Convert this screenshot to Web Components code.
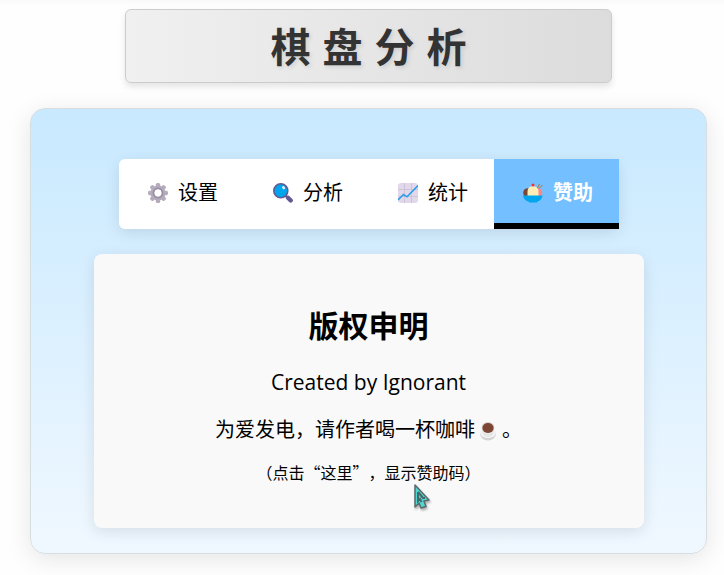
<!DOCTYPE html>
<html lang="zh-CN">
<head>
<meta charset="utf-8">
<title>棋盘分析</title>
<style>
html { background: #fefefe; }
body { margin: 0; padding: 9px 17px 21px 30px; color: #000; font: 20px/28px "Open Sans", "Noto Sans CJK SC", sans-serif;
  background: linear-gradient(#f9f9f9, #fefefe) content-box top / 100% 6px no-repeat; background-origin: border-box; background-clip: border-box; }
</style>
</head>
<body>
<board-page>
  <page-title>棋盘分析</page-title>
  <board-panel>
    <tab-bar>
      <tab-item icon="gear">设置</tab-item>
      <tab-item icon="search">分析</tab-item>
      <tab-item icon="chart">统计</tab-item>
      <tab-item icon="sundae" active>赞助</tab-item>
    </tab-bar>
    <copyright-card></copyright-card>
  </board-panel>
</board-page>
<script>
const icons = {
  gear: `<svg viewBox="0 0 20 20" width="20" height="20" aria-hidden="true"><g fill="#b4acbc"><circle cx="10" cy="10" r="7.6"/><rect x="7.8" y="0" width="4.4" height="20" rx="1.6"/><rect x="7.8" y="0" width="4.4" height="20" rx="1.6" transform="rotate(45 10 10)"/><rect x="7.8" y="0" width="4.4" height="20" rx="1.6" transform="rotate(90 10 10)"/><rect x="7.8" y="0" width="4.4" height="20" rx="1.6" transform="rotate(135 10 10)"/></g><circle cx="10" cy="10" r="4.4" fill="#fff" stroke="#998ea4" stroke-width="2"/><circle cx="10" cy="10" r="3.4" fill="#fff"/></svg>`,
  search: `<svg viewBox="0 0 20 20" width="20" height="20" aria-hidden="true"><path d="M12.5 12.5l2 2" stroke="#533566" stroke-width="2"/><path d="M15 14.8l2.7 2.7" stroke="#635994" stroke-width="4.4" stroke-linecap="round"/><circle cx="7.8" cy="7.8" r="7" fill="#00a6ed" stroke="#635994" stroke-width="1.6"/><ellipse cx="10.6" cy="4.7" rx="1.3" ry="1.7" fill="#e8f7ff" transform="rotate(-35 10.6 4.7)"/></svg>`,
  chart: `<svg viewBox="0 0 20 20" width="20" height="20" aria-hidden="true"><rect width="20" height="20" rx="3" fill="#e1d8ec"/><path d="M6.5 0v20M13.5 0v20M0 6.5h20M0 13.5h20" stroke="#cdc4d6" stroke-width="1"/><path d="M0 17l5.5-5.5 3.5 2.3L20 2.5" fill="none" stroke="#2b9ee8" stroke-width="1.6"/></svg>`,
  sundae: `<svg viewBox="0 0 20 20" width="20" height="20" aria-hidden="true"><path d="M14 6l2.5-5M15.5 6l4-4" stroke="#b97028" stroke-width="1"/><circle cx="4.7" cy="9.8" r="4.5" fill="#7d4533"/><circle cx="14.8" cy="9.8" r="4.5" fill="#ff8687"/><path d="M4.5 13V8.5a5.5 5.5 0 0 1 11 0V13z" fill="#ffefb6"/><circle cx="10" cy="1.9" r="1.5" fill="#f8312f"/><path d="M0 12.5h19.500c-.4 3.300-2.600 5.500-5.500 6.300v.7H6v-.7C2.800 18 .4 15.800 0 12.500z" fill="#00a6ed"/></svg>`,
  coffee: `<svg viewBox="0 0 20 20" width="20" height="20" aria-hidden="true"><ellipse cx="10" cy="13" rx="8" ry="6.5" fill="#d3d3d3"/><path d="M2 11c0 3.800 3.600 6 8 6s8-2.200 8-6l-1-2H3z" fill="#f4f4f4"/><path d="M4 5v4c0 5 2.500 7 6 7s6-2 6-7V5z" fill="#e6e6e6"/><ellipse cx="10" cy="6.5" rx="6.3" ry="5.5" fill="#d3d3d3"/><ellipse cx="10" cy="7" rx="5.6" ry="5" fill="#7d4533"/></svg>`
};

function define(name, html, setup) {
  customElements.define(name, class extends HTMLElement {
    constructor() {
      super();
      this.attachShadow({ mode: "open" }).innerHTML = html;
    }
    connectedCallback() { if (setup) setup(this, this.shadowRoot); }
  });
}

define("board-page", `<style>
:host { display: flex; flex-direction: column; align-items: center; gap: 25px; }
</style><slot></slot>`);

define("page-title", `<style>
:host { display: block; box-sizing: border-box; width: 72%; padding: 9px 0 7px 12px; border: 1px solid #ccc; border-radius: 6px;
  background: linear-gradient(to right, #f0f0f0, #dcdcdc); box-shadow: 0 4px 6px rgba(0,0,0,.1); }
h1 { margin: 0; color: #333; text-align: center; font-size: 40px; line-height: 56px; font-weight: 700; letter-spacing: 12px; text-shadow: 2px 2px 4px rgba(0,0,0,.1); }
</style><h1><slot></slot></h1>`);

define("board-panel", `<style>
:host { display: flex; flex-direction: column; align-items: center; gap: 25px; box-sizing: border-box; width: 100%;
  padding: 50px 24px 25px; border: 1px solid #d8dde0; border-radius: 15px;
  background: linear-gradient(#c8e9ff, #f0f8ff); box-shadow: 0 5px 25px rgba(0,0,0,.1); }
</style><slot></slot>`);

define("tab-bar", `<style>
:host { display: block; width: 100%; max-width: 500px; border-radius: 6px; box-shadow: 0 4px 15px rgba(0,0,0,.1); }
nav { display: grid; grid-template-columns: repeat(4, 1fr); border-radius: 6px; background: #fff; }
</style><nav><slot></slot></nav>`);

define("tab-item", `<style>
:host { display: block; }
button { display: flex; align-items: center; justify-content: center; gap: 10px; box-sizing: border-box; width: 100%; margin: 0;
  padding: 20px 0 16px 4px; border: 0; border-bottom: 6px solid transparent; background: transparent; color: #000; font: inherit; white-space: nowrap; }
:host([active]) button { background: #74bfff; color: #fff; font-weight: 700; border-bottom-color: #000; }
svg { display: block; }
</style><button type="button"><span class="icon"></span><span><slot></slot></span></button>`,
(el, root) => {
  root.querySelector(".icon").innerHTML = icons[el.getAttribute("icon")];
  root.querySelector("button").setAttribute("aria-pressed", el.hasAttribute("active"));
});

define("copyright-card", `<style>
:host { display: block; box-sizing: border-box; width: 100%; max-width: 550px; padding: 50px 20px 44px; border-radius: 8px;
  background: #f9f9f9; text-align: center; box-shadow: 0 4px 15px rgba(0,0,0,.1); }
h2 { margin: 0 0 20px; font-size: 30px; line-height: 44px; font-weight: 700; }
p { margin: 0 0 16px; }
.author { margin-bottom: 20px; font-size: 21px; }
.small { position: relative; margin: 0; font-size: 16px; line-height: 24px; font-family: "Noto Sans CJK SC", sans-serif; text-spacing-trim: space-all; }
.coffee { display: inline-block; margin: 0 4px 0 3px; vertical-align: -4px; line-height: 0; }
.pointer { position: absolute; left: calc(50% + 45px); top: 24px; overflow: visible; filter: drop-shadow(1px 2px 1px rgba(0,0,0,.3)); }
</style>
<h2>版权申明</h2>
<p class="author">Created by Ignorant</p>
<p>为爱发电，请作者喝一杯咖啡<span class="coffee">${icons.coffee}</span>。</p>
<p class="small">（点击“这里”，显示赞助码）
<svg class="pointer" viewBox="0 0 16 26" width="16" height="26" aria-hidden="true"><path d="M1 1v22l4-4 2 5 5-1.500-2-5.500 5-1z" fill="#4fd8d0" stroke="#59696c" stroke-width="1.5" stroke-linejoin="round"/><path d="M4 8v9l2-2 1.500 3M4 8l5 6h2" fill="none" stroke="#48686c" stroke-width="2"/></svg></p>`);
</script>
</body>
</html>
